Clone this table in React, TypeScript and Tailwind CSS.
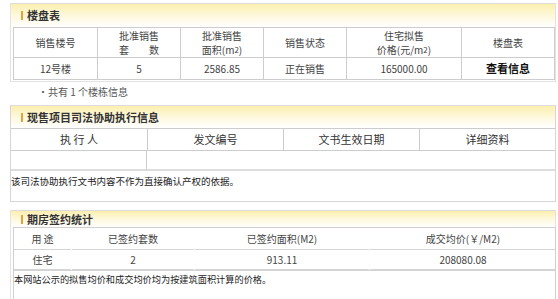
import React from 'react';

const sans = { fontFamily: '"Noto Sans CJK SC", "Noto Sans", sans-serif' };

const SectionHeader: React.FC<{ title: string; className?: string }> = ({ title, className = '' }) => (
  <div className={`flex items-center bg-linear-to-b from-[#fcefae] via-[#fef8dc] to-white border-t border-[#dcdcdc] ${className}`}>
    <span className="ml-[10px] mr-[4px] w-[2px] h-[9px] bg-[#e5a33a]" />
    <span className="text-[11px] font-bold text-[#333] leading-none">{title}</span>
  </div>
);

const Sup2 = () => <sup className="text-[8px] relative -top-[1px]">2</sup>;

export default function App() {
  const th1 = 'border border-[#cdcdcd] text-center font-normal text-[10px] leading-[14px] text-[#444]';
  const td1 = 'border border-[#cdcdcd] text-center text-[10px] text-[#444]';

  return (
    <div className="w-[558px] h-[299px] bg-white overflow-hidden" style={sans}>
      <div className="ml-[10px] w-[546px] pt-[3px]">
        {/* 楼盘表 */}
        <div className="border-x border-b border-[#e3e3e3] pb-[1px]">
          <SectionHeader title="楼盘表" className="h-[24px]" />
          <table className="ml-[2px] w-[541px] border-collapse table-fixed">
            <colgroup>
              <col className="w-[84px]" />
              <col className="w-[83px]" />
              <col className="w-[83px]" />
              <col className="w-[83px]" />
              <col className="w-[115px]" />
              <col className="w-[93px]" />
            </colgroup>
            <thead>
              <tr className="h-[30px]">
                <th className={th1}>销售楼号</th>
                <th className={th1}>
                  批准销售
                  <br />
                  套<span className="inline-block w-[20px]" />数
                </th>
                <th className={th1}>
                  批准销售
                  <br />
                  面积(m<Sup2 />)
                </th>
                <th className={th1}>销售状态</th>
                <th className={th1}>
                  住宅拟售
                  <br />
                  价格(元/m<Sup2 />)
                </th>
                <th className={th1}>楼盘表</th>
              </tr>
            </thead>
            <tbody>
              <tr className="h-[22px]">
                <td className={td1}>12号楼</td>
                <td className={td1}>5</td>
                <td className={td1}>2586.85</td>
                <td className={td1}>正在销售</td>
                <td className={td1}>165000.00</td>
                <td className="border border-[#cdcdcd] text-center text-[11px] font-bold text-[#111]">查看信息</td>
              </tr>
            </tbody>
          </table>
        </div>

        <p className="pl-[28px] pt-[3px] h-[23px] text-[10px] leading-[14px] text-[#555]">·共有 1 个楼栋信息</p>

        {/* 司法协助 */}
        <div className="border-x border-[#d6d6d6]">
          <SectionHeader title="现售项目司法协助执行信息" className="h-[23px]" />
          <div className="grid grid-cols-4 border-t border-[#cccccc]">
            {['执 行 人', '发文编号', '文书生效日期', '详细资料'].map((h, i) => (
              <div
                key={h}
                className={`h-[22px] flex items-center justify-center text-[11px] text-[#333] border-b border-[#cccccc] ${i > 0 ? 'border-l' : ''}`}
              >
                {h}
              </div>
            ))}
            {[0, 1, 2, 3].map(i => (
              <div key={i} className={`h-[20px] border-b-2 border-[#dddddd] ${i === 0 ? 'border-r border-r-[#cccccc]' : ''}`} />
            ))}
          </div>
          <div
            className="h-[31px] pt-[4px] text-[9.5px] leading-[14px] text-[#222] border-b border-[#d6d6d6]"
            style={{ fontFamily: '"Liberation Serif", "Noto Sans CJK SC", serif' }}
          >
            该司法协助执行文书内容不作为直接确认产权的依据。
          </div>
        </div>

        {/* 期房签约统计 */}
        <div className="mt-[8px] border-x border-[#e3e3e3]">
          <SectionHeader title="期房签约统计" className="h-[17px]" />
          <div className="ml-[2px] w-[543px] border-l border-r border-t border-[#cfcfcf]">
            <div className="grid grid-cols-[57px_122px_174px_186px] gap-x-[1px] text-[10px] text-[#444]">
              {['用 途', '已签约套数', '已签约面积(M2)', '成交均价(￥/M2)'].map(h => (
                <div key={h} className="h-[22px] flex items-center justify-center border-b border-[#d4d4d4]">
                  {h}
                </div>
              ))}
              {['住宅', '2', '913.11', '208080.08'].map(v => (
                <div key={v} className="h-[20px] flex items-center justify-center border-b border-[#d4d4d4]">
                  {v}
                </div>
              ))}
            </div>
            <div
              className="h-[30px] pt-[2px] text-[9.2px] leading-[14px] text-[#222] border-t border-[#d4d4d4]"
              style={{ fontFamily: '"Liberation Serif", "Noto Sans CJK SC", serif' }}
            >
              本网站公示的拟售均价和成交均价均为按建筑面积计算的价格。
            </div>
          </div>
        </div>
      </div>
    </div>
  );
}
